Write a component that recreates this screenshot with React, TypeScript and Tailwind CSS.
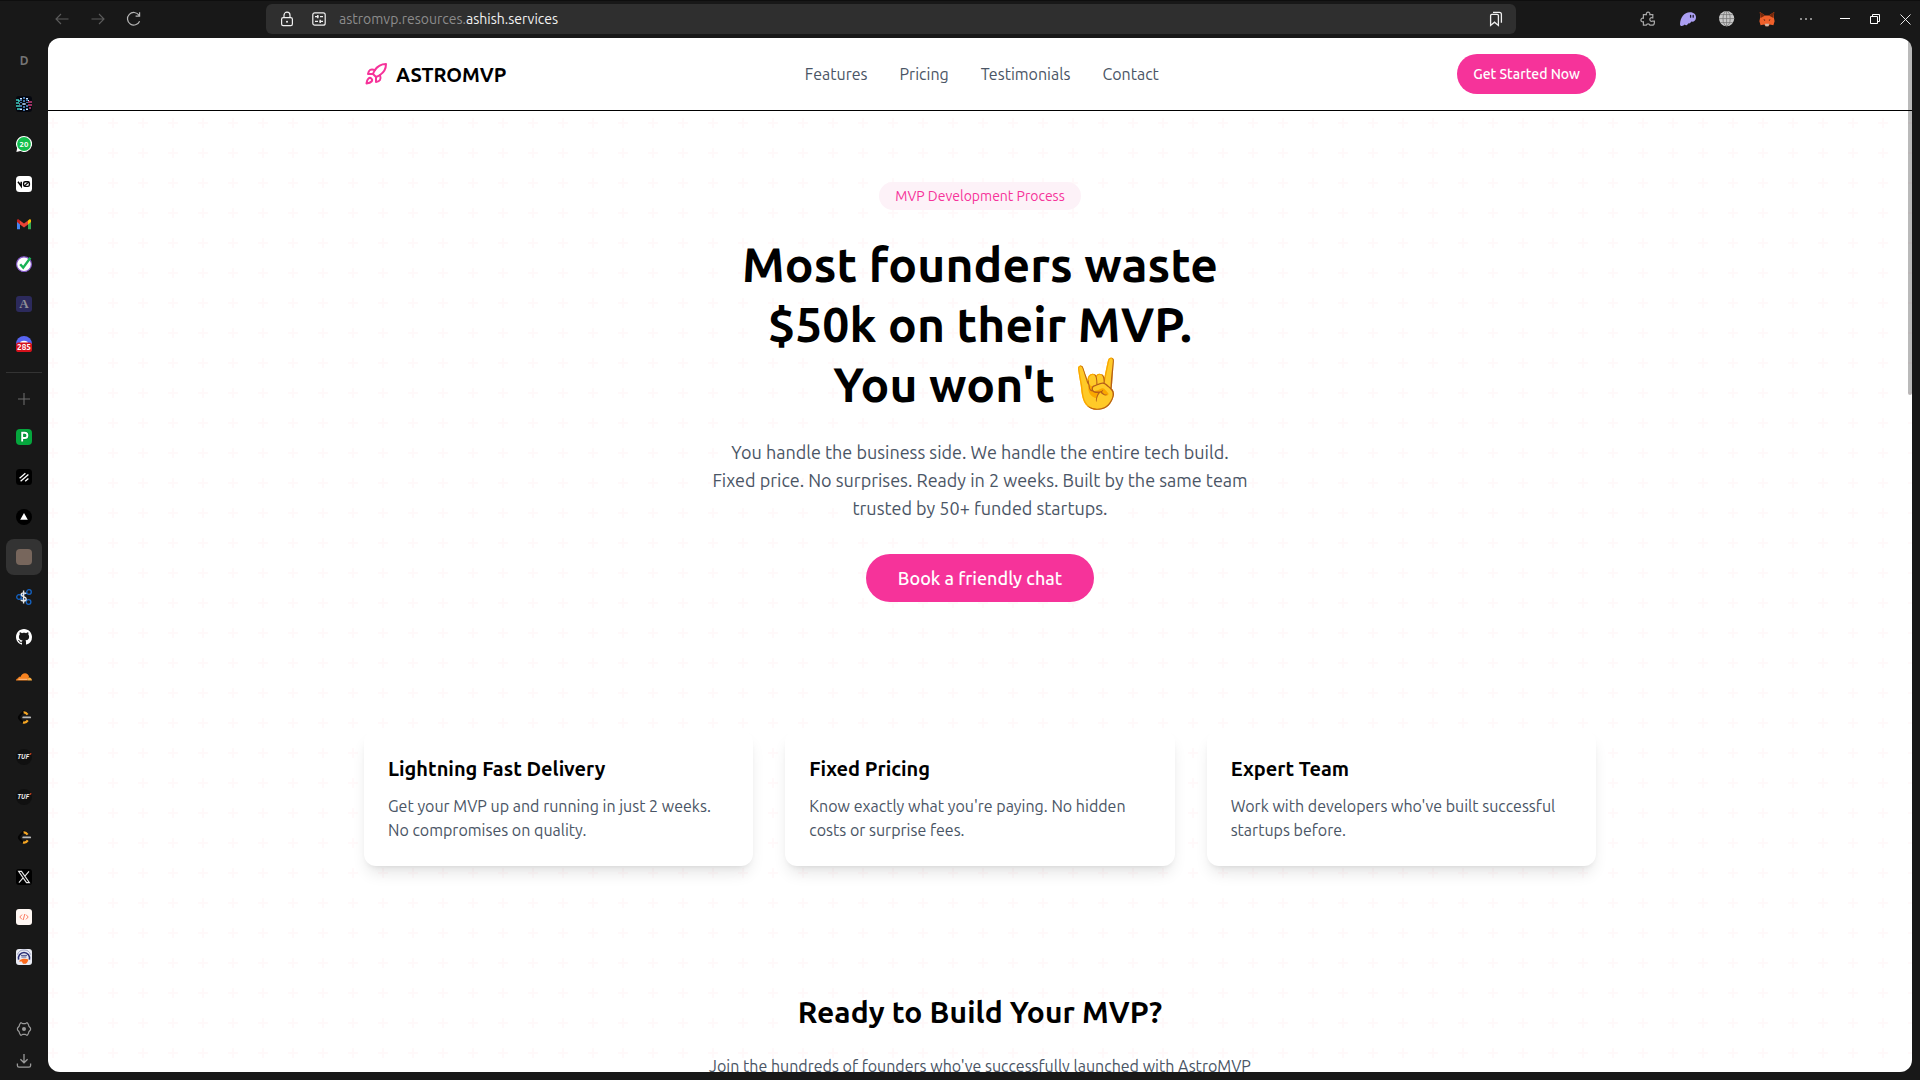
import type { ReactNode } from "react";
import { Rocket } from "lucide-react";

function Svg({ children, size = 16, box = 16 }: { children: ReactNode; size?: number; box?: number }) {
  return (
    <svg width={size} height={size} viewBox={`0 0 ${box} ${box}`} fill="none" className="block shrink-0">
      {children}
    </svg>
  );
}

const Leetcode = () => (
  <Svg>
    <path d="M8.4 1.6L3.8 6.6a2.6 2.6 0 0 0 0 3.6l3 3" stroke="#050505" strokeWidth="2" />
    <path d="M7.6 3.4c1.6-.2 3 .8 4 2.2" stroke="#f5a623" strokeWidth="2.2" />
    <path d="M7 13.4c2 .6 3.6-.2 4.8-2" stroke="#f5a623" strokeWidth="2.2" />
    <path d="M7.2 8.4h7" stroke="#b9b9b9" strokeWidth="1.8" strokeLinecap="round" />
  </Svg>
);

const Tuf = () => (
  <div className="flex size-4 items-center justify-center rounded-full bg-[#101010]">
    <span className="text-[6.5px] leading-none font-bold text-[#f0f0f0] italic">
      TUF<span className="text-[#f05a28]">'</span>
    </span>
  </div>
);

const pinned: ReactNode[] = [
  <Svg>
    <rect width="16" height="16" rx="3" fill="#05070f" />
    <path d="M0 4h3M0 7h3M0 10h4M1 13h3M2 5h2" stroke="#3fd0c4" strokeWidth="1.4" />
    <path d="M12 6h4M12 9h4M13 12h2" stroke="#c9407e" strokeWidth="1.4" />
    <path d="M8 1v14M5 3v4M11 3v4M5 9v4M11 9v4" stroke="#5b9be0" strokeWidth="1.5" strokeDasharray="2 1" />
    <path d="M4 2.5h2M10 2.5h2M4 13.5h2M10 13.5h2M6 8h4M3 8h1M12 4.5h1" stroke="#cfe6ff" strokeWidth="1.1" />
  </Svg>,
  <Svg>
    <path d="M8 0a8 8 0 1 1-3.6 15.1L.4 16l.8-3.9A8 8 0 0 1 8 0z" fill="#fff" />
    <circle cx="8" cy="8" r="6.9" fill="#14bf4d" />
    <text x="8" y="10.8" textAnchor="middle" fontSize="7.8" fontWeight="700" fill="#fff">20</text>
  </Svg>,
  <Svg>
    <rect width="16" height="16" rx="3.5" fill="#fff" />
    <path d="M2 5.8l3.2 4.4V5.8" stroke="#000" strokeWidth="1.5" />
    <rect x="7.6" y="5.8" width="5.8" height="4.6" rx="1.6" stroke="#000" strokeWidth="1.4" />
    <path d="M8 10.2l5-4.3" stroke="#000" strokeWidth="1.2" />
  </Svg>,
  <Svg>
    <path d="M1 4v9.2h3V7z" fill="#4285f4" />
    <path d="M15 4v9.2h-3V7z" fill="#34a853" />
    <path d="M12 4.6L13.2 3.4C14 2.8 15 3.3 15 4.3v1.8l-3 2.3z" fill="#fbbc04" />
    <path d="M4 4.6L2.8 3.4C2 2.8 1 3.3 1 4.3v1.8l3 2.3z" fill="#c5221f" />
    <path d="M4 8.4V4.6l4 3 4-3v3.8l-4 3z" fill="#ea4335" />
  </Svg>,
  <Svg>
    <circle cx="8" cy="8.2" r="7.4" fill="#fff" stroke="#8458c9" strokeWidth="1.2" />
    <path d="M4.2 8.2l3 3.4L14.4 1.8" stroke="#19b357" strokeWidth="2.4" />
  </Svg>,
  <Svg>
    <rect width="16" height="16" rx="3" fill="#2c2a5c" />
    <text x="8" y="12.4" textAnchor="middle" fontSize="13" fontWeight="700" fill="#8f8f96" fontFamily='"Liberation Serif", serif'>A</text>
  </Svg>,
  <Svg>
    <path d="M0 8a8 8 0 0 1 16 0z" fill="#5865f2" />
    <path d="M4.5 5.8c1.8-1.3 5.2-1.3 7 0l.6 1.6H3.9z" fill="#fff" />
    <rect y="6.6" width="16" height="9.4" rx="2.6" fill="#d4111b" />
    <text x="8" y="14.2" textAnchor="middle" fontSize="8.2" fontWeight="700" fill="#fff">285</text>
  </Svg>,
];

const tabs: ReactNode[] = [
  <Svg>
    <rect width="16" height="16" rx="4" fill="#05a63d" />
    <path d="M6.2 12.6V3.8h2.6a2.6 2.6 0 0 1 0 5.2H6.4" stroke="#083" strokeWidth="3.6" strokeLinejoin="round" />
    <path d="M6.2 12.6V3.8h2.6a2.6 2.6 0 0 1 0 5.2H6.4" stroke="#fff" strokeWidth="1.9" />
  </Svg>,
  <Svg>
    <rect width="16" height="16" rx="3.5" fill="#000" />
    <path d="M3.6 9.2l5.8-5M4.6 12.2l7.8-6.8M9.2 12.2l3.2-2.8" stroke="#fff" strokeWidth="1.3" />
  </Svg>,
  <Svg>
    <circle cx="8" cy="8" r="8" fill="#000" />
    <path d="M8 4l3.8 6.8H4.2z" fill="#fff" />
  </Svg>,
  <div className="size-4 rounded-[4px] bg-[#77665c]" />,
  <Svg>
    <g stroke="#1463c4" strokeWidth="1.3">
      <circle cx="3" cy="8" r="2.3" />
      <circle cx="13" cy="3" r="2.3" />
      <circle cx="12.6" cy="13" r="2.3" />
      <path d="M5 6.5l6-2.6M5 9.4l5.6 2.6" />
    </g>
    <path d="M10 4.8C9.4 3.6 5.2 3.2 5.2 5.6c0 2.6 5 1.6 5 4.4 0 2.6-4.6 2.4-5.4.8M7.6 1.4v13" stroke="#e8e8e8" strokeWidth="1.4" />
  </Svg>,
  <Svg>
    <path fill="#fff" d="M8 0C3.58 0 0 3.58 0 8c0 3.54 2.29 6.53 5.47 7.59.4.07.55-.17.55-.38 0-.19-.01-.82-.01-1.49-2.01.37-2.53-.49-2.69-.94-.09-.23-.48-.94-.82-1.13-.28-.15-.68-.52-.01-.53.63-.01 1.08.58 1.23.82.72 1.21 1.87.87 2.33.66.07-.52.28-.87.51-1.07-1.78-.2-3.64-.89-3.64-3.95 0-.87.31-1.59.82-2.15-.08-.2-.36-1.02.08-2.12 0 0 .67-.21 2.2.82.64-.18 1.32-.27 2-.27s1.36.09 2 .27c1.53-1.04 2.2-.82 2.2-.82.44 1.1.16 1.92.08 2.12.51.56.82 1.27.82 2.15 0 3.07-1.87 3.75-3.65 3.95.29.25.54.73.54 1.48 0 1.07-.01 1.93-.01 2.2 0 .21.15.46.55.38A8.01 8.01 0 0 0 16 8c0-4.42-3.58-8-8-8z" />
  </Svg>,
  <Svg>
    <path d="M0 11.6c0-1.5.9-2.3 2.2-2.4C2.4 8 3.6 7.6 4.4 8 5.2 5.6 7 4.2 9 4.2c2 0 3.6 1.4 4 3.4l-1.6 4z" fill="#f6821f" />
    <path d="M11.4 11.6l1-3c2-.5 3.6 1 3.6 3z" fill="#fbad41" />
    <path d="M2.4 10.3h9.2" stroke="#fff" strokeWidth=".5" />
  </Svg>,
  <Leetcode />,
  <Tuf />,
  <Tuf />,
  <Leetcode />,
  <Svg>
    <rect width="16" height="16" rx="3" fill="#000" />
    <path d="M2.6 2.4h2.9l7.9 11.2h-2.9zM13 2.4L8.7 7.3M7.1 8.9l-4.2 4.7" stroke="#e8e8e8" strokeWidth="1.1" />
  </Svg>,
  <Svg>
    <rect width="16" height="16" rx="3" fill="#fff8f4" />
    <path d="M6 5.6L3.8 8 6 10.4M10 5.6L12.2 8 10 10.4M8.8 5l-1.6 6" stroke="#fb7b62" strokeWidth="1" />
  </Svg>,
  <Svg>
    <rect width="16" height="16" rx="3" fill="#e9ebf3" />
    <path d="M2.6 10.6A5.6 5.6 0 1 1 13.4 10.6" stroke="#2b2f77" strokeWidth="1.6" />
    <path d="M1.4 5.6A7 7 0 0 1 14.6 5.6" stroke="#8d90b8" strokeWidth=".8" />
    <path d="M5 6.4h6M5.4 8h5" stroke="#51548c" strokeWidth="1" />
    <path d="M4 11c2-1.4 6-1.6 8.4-.6-.4 1.6-1.2 3.6-2.6 4.4H7L5.8 12.6H3z" fill="#fb6a1d" />
  </Svg>,
];

const features = [
  ["Lightning Fast Delivery", "Get your MVP up and running in just 2 weeks. No compromises on quality."],
  ["Fixed Pricing", "Know exactly what you're paying. No hidden costs or surprise fees."],
  ["Expert Team", "Work with developers who've built successful startups before."],
];

function TopBar() {
  return (
    <header className="flex h-[38px] shrink-0 items-center border-t border-[#0e0e0e] pr-[9px] pb-px pl-[54px]">
      <div className="flex w-[212px] items-center gap-5">
        <Svg>
          <path d="M14.5 8H2M7 3L2 8l5 5" stroke="#5c5c5c" strokeWidth="1.1" />
        </Svg>
        <Svg>
          <path d="M1.5 8H14M9 3l5 5-5 5" stroke="#5c5c5c" strokeWidth="1.1" />
        </Svg>
        <Svg>
          <path d="M13.6 10.2A6.3 6.3 0 1 1 13 4.2M13.6 1.2v3.9H9.6" stroke="#b5b5b5" strokeWidth="1.2" />
        </Svg>
      </div>
      <div className="flex h-[30px] w-[1250px] items-center rounded-md bg-[#2f2f2f] pr-3 pl-[13px]">
        <Svg>
          <rect x="2.6" y="6.6" width="10.8" height="8" rx="1.6" stroke="#f0f0f0" strokeWidth="1.2" />
          <path d="M5 6.6V4.2a3 3 0 0 1 6 0v2.4" stroke="#f0f0f0" strokeWidth="1.2" />
          <circle cx="8" cy="10.8" r="1" fill="#f0f0f0" />
        </Svg>
        <div className="ml-4 flex">
          <Svg>
            <rect x="1.8" y="1.8" width="12.4" height="12.4" rx="2" stroke="#f0f0f0" strokeWidth="1.2" />
            <path d="M4 5.6h3.4M9 5.6h3M4 10.4h3M8.6 10.4H12" stroke="#f0f0f0" strokeWidth="1.2" />
            <path d="M6.8 4v3.2M9.2 8.8V12" stroke="#f0f0f0" strokeWidth="1.4" />
          </Svg>
        </div>
        <p className="ml-3 text-sm text-[#8c8c8c]">
          astromvp.resources.<span className="text-[#f2f2f2]">ashish.services</span>
        </p>
        <div className="ml-auto">
          <Svg>
            <path d="M2.6 14.4V4.6c0-.8.5-1.3 1.3-1.3h5.2c.8 0 1.3.5 1.3 1.3v9.8l-3.9-3.2z" stroke="#f0f0f0" strokeWidth="1.3" />
            <path d="M5 1.4h6.4c1.2 0 2 .8 2 2v8.4" stroke="#f0f0f0" strokeWidth="1.3" />
          </Svg>
        </div>
      </div>
      <div className="ml-[124px] flex items-center gap-[23.5px]">
        <Svg>
          <path d="M3.4 3.6h3a1.8 1.8 0 1 1 3.4 0h3v3.2h-.6a1.8 1.8 0 1 0 0 3.4h2.2v1.2c0 1.8-.8 2.8-2.4 2.8H10a2 2 0 0 0-3.8 0H3.4v-3.4a1.9 1.9 0 1 1 0-3.6z" stroke="#a8a8a8" strokeWidth="1.2" />
        </Svg>
        <Svg>
          <path d="M0 13.2C.3 6.6 4 1.2 10 1.2c4 0 6 2.4 6 5.2 0 2.8-2.2 4.8-4.6 4.2-.8 1.4-2 2.2-3 1.6-1 2-2.6 2.6-3.6 1.4C3.2 15.4.2 15.8 0 13.2z" fill="#ab9ff2" />
          <path d="M10.6 4.4v1.8M13.2 4.4v1.8" stroke="#1c1a2b" strokeWidth="1.3" strokeLinecap="round" />
        </Svg>
        <Svg>
          <circle cx="7.6" cy="7.6" r="7.6" fill="#c9c9c9" />
          <path d="M7.6 0v15M0 7.6h15.2M1.6 3.6h12M1.6 11.6h12" stroke="#777" strokeWidth=".8" />
          <ellipse cx="7.6" cy="7.6" rx="3.6" ry="7.4" stroke="#777" strokeWidth=".8" />
        </Svg>
        <Svg>
          <path d="M.8 1l5.4 3.4h3.6L15.2 1l-.4 5.2.8 4-1.2 4-3.6-.6-1.4 1.6H6.6l-1.4-1.6-3.6.6-1.2-4 .8-4z" fill="#f0602a" />
          <path d="M.8 1l5.4 3.4L1.6 7zM15.2 1L9.8 4.4 14.4 7z" fill="#77290c" />
          <path d="M4.4 8.2l2 .8-.8.8zM11.6 8.2l-2 .8.8.8z" fill="#20160f" />
          <path d="M5.8 12.8h4.4l-.8 2.4H6.6z" fill="#c9b8ab" />
        </Svg>
        <Svg>
          <g fill="#a8a8a8">
            <rect x="2" y="7.2" width="2" height="1.6" />
            <rect x="7" y="7.2" width="2" height="1.6" />
            <rect x="12" y="7.2" width="2" height="1.6" />
          </g>
        </Svg>
      </div>
      <div className="ml-auto flex items-center gap-5">
        <Svg size={10} box={10}>
          <path d="M0 4.5h10" stroke="#fff" />
        </Svg>
        <Svg size={10} box={10}>
          <path d="M.5 2.5h7v7h-7zM2.5 2.5v-2h7v7h-2" stroke="#fff" />
        </Svg>
        <Svg size={11} box={11}>
          <path d="M.5 .5l10 10M10.5 .5l-10 10" stroke="#fff" strokeWidth=".9" />
        </Svg>
      </div>
    </header>
  );
}

function Sidebar() {
  return (
    <aside className="flex w-12 shrink-0 flex-col items-center">
      <div className="flex h-[46px] items-center pb-px text-xs font-semibold text-[#757575]">D</div>
      {pinned.map((icon, i) => (
        <div key={i} className="flex size-10 items-center justify-center">{icon}</div>
      ))}
      <div className="flex h-4 w-9 items-center">
        <div className="h-px w-full bg-[#333]" />
      </div>
      <div className="flex h-[37px] items-center">
        <Svg size={12} box={12}>
          <path d="M6 0v12M0 6h12" stroke="#6b6b6b" strokeWidth="1.1" />
        </Svg>
      </div>
      {tabs.map((icon, i) => (
        <div key={i} className="flex size-10 items-center justify-center">
          <div className={i === 3 ? "flex size-9 items-center justify-center rounded-lg bg-[#333]" : "flex"}>{icon}</div>
        </div>
      ))}
      <div className="mt-9 flex h-8 items-center">
        <Svg>
          <path d="M4.6 1.9Q5 1.500 5.600 1.900L6.900 2.700H9.100L10.400 1.900Q11 1.500 11.400 1.900L12.500 3.700L12.800 5.200L14.400 7Q14.900 8 14.400 9L12.800 10.800L12.500 12.300L11.400 14.100Q11 14.500 10.400 14.100L9.100 13.300H6.900L5.600 14.100Q5 14.500 4.600 14.100L3.500 12.300L3.200 10.800L1.600 9Q1.100 8 1.600 7L3.200 5.200L3.500 3.700Z" stroke="#9a9a9a" strokeWidth="1.2" strokeLinejoin="round" />
          <circle cx="8" cy="8" r="2" fill="#9a9a9a" />
        </Svg>
      </div>
      <div className="flex h-8 items-center">
        <Svg>
          <path d="M8 1v8.6M4.4 6.2L8 9.8l3.6-3.6M1.4 10.4v2.2c0 1 .6 1.6 1.6 1.6h10c1 0 1.6-.6 1.6-1.6v-2.2" stroke="#9a9a9a" strokeWidth="1.3" />
        </Svg>
      </div>
    </aside>
  );
}

function PlusPattern() {
  return (
    <svg className="absolute inset-0 h-full w-full">
      <defs>
        <pattern id="plus" width="30" height="30" y="-23" patternUnits="userSpaceOnUse">
          <path d="M4 0h2v4h4v2H6v4H4V6H0V4h4z" fill="#fff9fa" />
        </pattern>
      </defs>
      <rect width="100%" height="100%" fill="url(#plus)" />
    </svg>
  );
}

function Site() {
  return (
    <main className="relative flex min-w-0 flex-1 flex-col overflow-hidden rounded-xl bg-white text-black">
      <div className="h-[73px] shrink-0 border-b border-black">
        <div className="mx-auto flex h-full max-w-7xl items-center justify-between px-6">
          <div className="flex items-center gap-2">
            <Rocket className="size-6 text-[#f6339a]" />
            <span className="pt-0.5 text-xl font-semibold">ASTROMVP</span>
          </div>
          <nav className="flex gap-8 text-[#4a5565]">
            <a>Features</a>
            <a>Pricing</a>
            <a>Testimonials</a>
            <a>Contact</a>
          </nav>
          <button className="h-10 rounded-full bg-[#f6339a] px-4 text-sm font-medium text-white">Get Started Now</button>
        </div>
      </div>
      <div className="relative min-h-0 flex-1">
        <PlusPattern />
        <div className="relative mx-auto flex max-w-7xl flex-col items-center px-6 pt-[71px] text-center">
          <span className="rounded-full bg-[#fdf2f8] px-4 py-1 text-sm text-[#f6339a]">MVP Development Process</span>
          <h1 className="mt-6 text-5xl leading-[60px] font-semibold tracking-[0.08px]">
            Most founders waste
            <br />
            $50k on their MVP.
            <br />
            You won't <span className="relative -top-0.5">🤘</span>
          </h1>
          <p className="mt-6 w-[540px] text-lg leading-7 text-[#4a5565]">
            You handle the business side. We handle the entire tech build. Fixed price. No surprises. Ready in 2 weeks.
            Built by the same team trusted by 50+ funded startups.
          </p>
          <button className="mt-8 h-12 rounded-full bg-[#f6339a] px-8 text-lg font-medium text-white">
            Book a friendly chat
          </button>
          <section className="mt-32 grid w-full grid-cols-3 gap-8 text-left">
            {features.map(([title, body]) => (
              <article key={title} className="rounded-xl bg-white p-6 shadow-lg">
                <h3 className="text-xl leading-[30px] font-semibold">{title}</h3>
                <p className="mt-2.5 leading-6 text-[#4a5565]">{body}</p>
              </article>
            ))}
          </section>
          <h2 className="mt-32 text-3xl leading-9 font-semibold tracking-[0.05px]">Ready to Build Your MVP?</h2>
          <p className="mt-6 text-[#4a5565]">Join the hundreds of founders who've successfully launched with AstroMVP</p>
        </div>
      </div>
      <div className="absolute top-0 right-0 h-[357px] w-1 rounded-b-sm bg-black/27" />
    </main>
  );
}

export default function App() {
  return (
    <div className="flex h-[1080px] w-[1920px] flex-col overflow-hidden bg-[#181818] font-[Ubuntu,'Open_Sans',sans-serif]">
      <TopBar />
      <div className="flex min-h-0 flex-1">
        <Sidebar />
        <div className="flex min-w-0 flex-1 pr-2 pb-2">
          <Site />
        </div>
      </div>
    </div>
  );
}
